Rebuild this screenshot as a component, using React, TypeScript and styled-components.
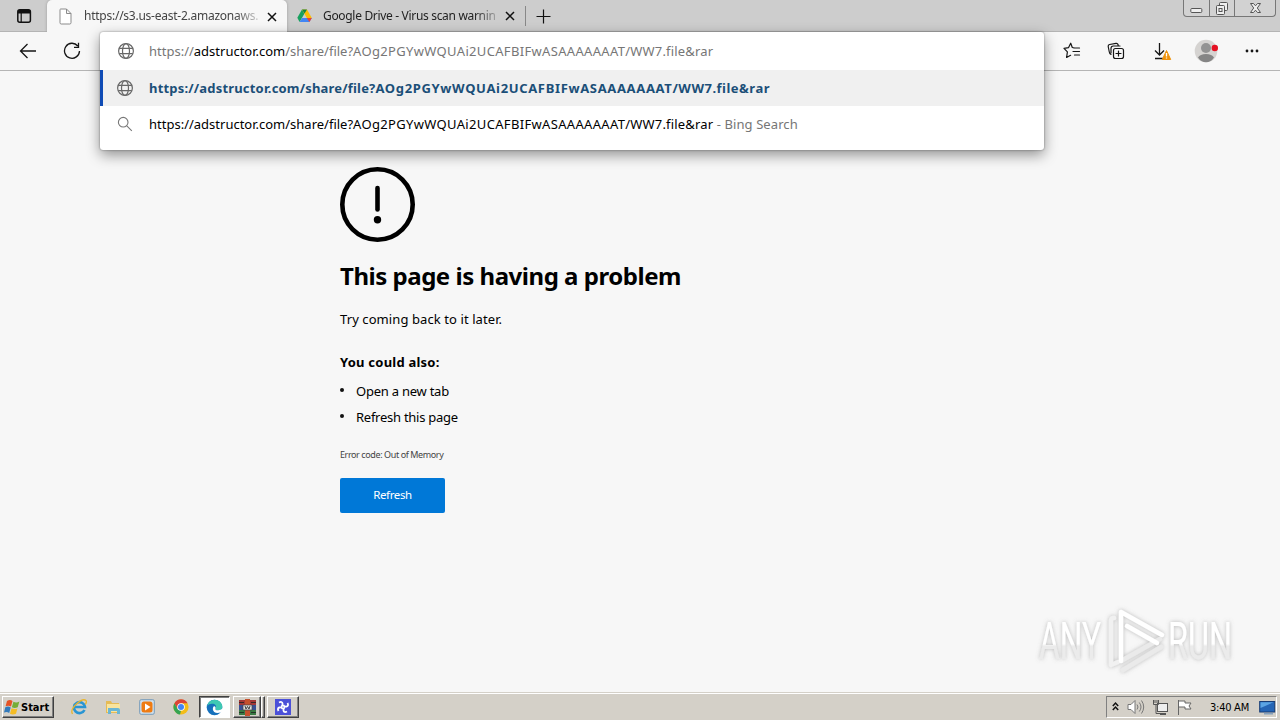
import React from "react";
import styled, { createGlobalStyle } from "styled-components";

const Global = createGlobalStyle`
  * { box-sizing: border-box; }
  body { margin: 0; overflow: hidden; font-family: "Noto Sans", "Open Sans", sans-serif; color: #000; }
  svg { display: block; flex: none; }
`;
const Screen = styled.div`
  width: 1280px; height: 720px; display: flex; flex-direction: column; background: #f7f7f7;
`;
const TabStrip = styled.header`
  height: 32px; flex: none; display: flex; background: #cdcdcd; border-bottom: 1px solid #b4b4b4;
`;
const TabMenu = styled.div`
  width: 47px; padding: 9px 0 0 17px;
`;
const Tab = styled.div<{ $active?: boolean; $width: number }>`
  width: ${p => p.$width}px; height: ${p => (p.$active ? 32 : 31)}px;
  display: flex; align-items: center; padding: 0 10px 0 ${p => (p.$active ? 11 : 10)}px;
  background: ${p => (p.$active ? "#f7f7f7" : "transparent")};
  border-radius: 5px 5px 0 0;
  box-shadow: ${p => (p.$active ? "0 0 3px #999" : "none")};
`;
const TabTitle = styled.span<{ $track: number; $color: string }>`
  width: 176px; margin-left: 11px; white-space: nowrap;
  font-size: 12px; line-height: 20px; letter-spacing: ${p => p.$track}px; color: ${p => p.$color};
  mask-image: linear-gradient(to right, #000 86%, rgba(0,0,0,.15));
`;
const CloseSlot = styled.span`
  margin-left: auto; padding-top: 1px;
`;
const NewTab = styled.div`
  display: flex; align-items: center; gap: 10px; height: 32px;
`;
const Divider = styled.i`
  width: 1px; height: 20px; background: #888;
`;
const WindowButtons = styled.div`
  margin: 0 4px 0 auto; height: 17px; display: flex; border: 1px solid #777; border-top: 0; border-radius: 0 0 4px 4px;
  background: #d2d2d2;
`;
const WindowButton = styled.div<{ $width: number }>`
  width: ${p => p.$width}px; display: flex; justify-content: center;
  & + & { border-left: 1px solid #777; }
`;
const Toolbar = styled.nav`
  position: relative; height: 39px; flex: none; display: flex; align-items: center; border-bottom: 1px solid #b5b5b5;
  background: #f7f7f7;
`;
const NavIcons = styled.div`
  display: flex; gap: 26px; padding-left: 19px;
`;
const ActionIcons = styled.div`
  margin-left: auto; display: flex; align-items: center; gap: 21px; padding-right: 16px;
`;
const Omnibox = styled.div`
  position: absolute; z-index: 2; left: 100px; top: 0; width: 944px; height: 118px; background: #fff;
  border-radius: 3px; box-shadow: 0 0 2px rgba(0,0,0,.45), 0 5px 14px rgba(0,0,0,.42);
`;
const Row = styled.div<{ $height: number; $selected?: boolean; $input?: boolean }>`
  height: ${p => p.$height}px; display: flex; align-items: center;
  padding-left: ${p => (p.$selected ? 14 : p.$input ? 18 : 17)}px;
  border-left: ${p => (p.$selected ? "3px solid #0f4bb5" : "0")};
  background: ${p => (p.$selected ? "#f0f0f0" : "transparent")};
`;
const RowText = styled.span<{ $color: string; $bold?: boolean; $input?: boolean; $track: number }>`
  margin-left: ${p => (p.$input ? 15 : 16)}px; white-space: pre; font-size: 13px; line-height: 18px;
  color: ${p => p.$color}; font-weight: ${p => (p.$bold ? 700 : 400)}; letter-spacing: ${p => p.$track}px;
`;
const Tint = styled.span<{ $color?: string; $track?: number }>`
  color: ${p => p.$color ?? "inherit"}; letter-spacing: ${p => (p.$track === undefined ? "inherit" : p.$track + "px")};
`;
const Page = styled.main`
  position: relative; flex: 1; padding: 96px 0 0 340px; display: flex; flex-direction: column; align-items: flex-start;
`;
const Heading = styled.h1`
  margin: 17px 0 0; font-size: 24px; line-height: 34px; font-weight: 700; letter-spacing: -0.47px; white-space: nowrap;
`;
const Line = styled.p<{ $top: number; $bold?: boolean; $track: number }>`
  margin: ${p => p.$top}px 0 0; font-size: 13px; line-height: 20px; font-weight: ${p => (p.$bold ? 700 : 400)};
  letter-spacing: ${p => p.$track}px; white-space: nowrap;
`;
const Tips = styled.ul`
  list-style: none; margin: 6px 0 0; padding: 0; font-size: 13px; line-height: 26px;
`;
const Tip = styled.li<{ $track: number }>`
  display: flex; align-items: center; letter-spacing: ${p => p.$track}px; white-space: nowrap;
  &::before { content: ""; width: 4px; height: 4px; border-radius: 2px; background: #111; margin: 0 12px 3px 0; }
`;
const ErrorCode = styled.p`
  margin: 17px 0 0; font-size: 9px; line-height: 16px; color: #444; letter-spacing: -0.4px; white-space: nowrap;
`;
const RefreshButton = styled.button`
  margin-top: 15px; width: 105px; height: 35px; border: 0; border-radius: 2px; padding: 0 0 2px; background: #0078d7; color: #fff;
  font: 11.5px/20px "Noto Sans", sans-serif; letter-spacing: -0.4px;
`;
const Watermark = styled.div`
  position: absolute; left: 1030px; top: 534px;
`;
const Taskbar = styled.footer`
  height: 28px; flex: none; display: flex; align-items: center; padding: 1px 3px 0 2px;
  background: #d4d0c8; border-top: 1px solid #d4d0c8; box-shadow: inset 0 1px #fff;
`;
const Start = styled.div`
  width: 52px; height: 22px; display: flex; align-items: center; padding-left: 1px; border: 1px solid;
  border-color: #fff #404040 #404040 #fff; box-shadow: inset -1px -1px #808080;
  font: 700 11px "DejaVu Sans Condensed", "DejaVu Sans", sans-serif; letter-spacing: 0;
`;
const QuickLaunch = styled.div`
  display: flex; gap: 18px; margin: 0 10px 0 17px;
`;
const TaskButton = styled.div<{ $pressed?: boolean; $width: number; $gap?: number }>`
  width: ${p => p.$width}px; height: 22px; margin-right: ${p => p.$gap ?? 0}px; display: flex; align-items: center; justify-content: center;
  background: ${p => (p.$pressed ? "#fff" : "#d4d0c8")}; border: 1px solid;
  border-color: ${p => (p.$pressed ? "#404040 #fff #fff #404040" : "#fff #404040 #404040 #fff")};
  box-shadow: ${p => (p.$pressed ? "inset 1px 1px #808080" : "inset -1px -1px #808080")};
`;
const Tray = styled.div`
  margin-left: auto; width: 171px; height: 22px; display: flex; align-items: center; padding-left: 4px;
  border: 1px solid; border-color: #808080 #fff #fff #808080;
`;
const TrayIcons = styled.div`
  display: flex; align-items: center; gap: 7px;
`;
const Clock = styled.span`
  margin: 0 10px 0 17px; font: 11px "DejaVu Sans Condensed", "DejaVu Sans", sans-serif; letter-spacing: -0.25px; white-space: nowrap;
`;

const Globe = () => (
  <svg width="16" height="16" viewBox="0 0 16 16" fill="none" stroke="#686868" strokeWidth="1.2">
    <circle cx="8" cy="8" r="7.4" /><ellipse cx="8" cy="8" rx="3.5" ry="7.4" /><path d="M1.2 5.4h13.6M1.2 10.6h13.6" />
  </svg>
);
const Cross = () => (
  <svg width="10" height="10" viewBox="0 0 10 10" stroke="#111" strokeWidth="1.5"><path d="M1 1l8 8M9 1L1 9" /></svg>
);

const FileId = "AOg2PGYwWQUAi2UCAFBIFwAS" + "A".repeat(7) + "T";
const SharePath = ({ bold }: { bold?: boolean }) => (
  <>/share/file?<Tint $track={bold ? 0.65 : 0.33}>{FileId}</Tint><Tint $track={bold ? 0.5 : 0.18}>/WW7.file&amp;rar</Tint></>
);

const Drive = () => (
  <svg width="15" height="14" viewBox="0 0 15 14">
    <path d="M5 .5L.3 8.8 2.6 13 7.5 4.5z" fill="#18a15f" /><path d="M5 .5h5L14.8 9h-5z" fill="#fbbc05" />
    <path d="M5 .5h5L7.5 4.6z" fill="#118342" /><path d="M2.6 13L5 9h9.8l-2.4 4z" fill="#4285f4" /><path d="M9.8 9h5l-2.4 4z" fill="#ea4335" />
  </svg>
);

const TopTabs = () => (
  <TabStrip>
    <TabMenu>
      <svg width="15" height="14" viewBox="0 0 15 14"><rect x=".8" y=".8" width="12.6" height="12.4" rx="2" fill="none" stroke="#111" strokeWidth="1.5" /><path d="M1 1h12v3.5H1z" fill="#111" /><path d="M4.2 4v9" stroke="#111" strokeWidth="1.2" /></svg>
    </TabMenu>
    <Tab $active $width={240}>
      <svg width="15" height="17" viewBox="0 0 15 17" fill="#fff" stroke="#8b8b8b"><path d="M2.5 1h6l4.5 4.5v9.2q0 1.3-1.2 1.3H3.2Q2 16 2 14.7V2q0-1 .5-1zM8.5 1v4.5H13" /></svg>
      <TabTitle $track={-0.25} $color="#444">https://s3.us-east-2.amazonaws.</TabTitle>
      <CloseSlot><Cross /></CloseSlot>
    </Tab>
    <Tab $width={238}>
      <Drive />
      <TabTitle $track={-0.32} $color="#222">Google Drive - Virus scan warnin</TabTitle>
      <CloseSlot><Cross /></CloseSlot>
    </Tab>
    <NewTab><Divider /><svg width="15" height="15" viewBox="0 0 15 15" stroke="#111" strokeWidth="1.2"><path d="M7.5.5v14M.5 7.5h14" /></svg></NewTab>
    <WindowButtons>
      <WindowButton $width={25}><svg width="13" height="16" viewBox="0 0 13 16"><rect x=".8" y="8.5" width="11" height="4" rx="1" fill="#eee" stroke="#555" /></svg></WindowButton>
      <WindowButton $width={25}><svg width="14" height="16" viewBox="0 0 14 16" fill="#eee" stroke="#555"><rect x="4.5" y="2.5" width="8" height="8" rx="1" /><rect x="1.5" y="5.5" width="8" height="9" rx="1" /><rect x="4" y="8.5" width="3" height="3" /></svg></WindowButton>
      <WindowButton $width={41}><svg width="13" height="16" viewBox="0 0 13 16"><path d="M1.5 3.5h3l2 2.3 2-2.3h3L8.3 8l3.2 4.5h-3l-2-2.3-2 2.3h-3L4.7 8z" fill="#eee" stroke="#555" /></svg></WindowButton>
    </WindowButtons>
  </TabStrip>
);

const Actions = () => (
  <ActionIcons>
    <svg width="24" height="24" viewBox="-2 0 24 24" fill="none" stroke="#161616" strokeWidth="1.2" strokeLinejoin="round" strokeLinecap="round"><path d="M13 8.8l-1.7-.3L9.7 4.2 7.6 8.6 3 9.3l3.4 3.5L5.6 18.5l4-2.2M13.5 9h5M12 12.5h6.5M13.5 16h5" /></svg>
    <svg width="24" height="24" viewBox="0 0 24 24" fill="none" stroke="#161616" strokeWidth="1.2" strokeLinecap="round"><rect x="9.5" y="9.5" width="10" height="10" rx="2" /><path d="M14.5 12v5M12 14.5h5M7 15.5Q5.6 15 5.3 13L4.2 7.5Q4 5.8 5.6 5.5L12 4.3q1.6-.2 2 1.2l.3 1.3M7 14V9.3Q7 7 9.3 7H16" /></svg>
    <svg width="24" height="24" viewBox="0 0 24 24" fill="none" stroke="#161616" strokeWidth="1.3"><path d="M10.5 4v12M6 11.5l4.5 4.5 4.5-4.5M6 19.5h8" /><path d="M17.5 11.5l4.2 9h-8.4z" fill="#ef930c" stroke="#ef930c" strokeWidth="1" strokeLinejoin="round" /><path d="M17.5 14v3.5M17.5 18.5v1" stroke="#fff" /></svg>
    <svg width="25" height="24" viewBox="0 0 25 24"><circle cx="12" cy="12" r="11.3" fill="#d5d3d1" /><circle cx="12" cy="9" r="5" fill="#939393" /><path d="M4 18.5Q6 15 12 15t8 3.5Q17 23.3 12 23.3T4 18.5z" fill="#858585" /><circle cx="20.8" cy="9" r="3.2" fill="#e51123" /></svg>
    <svg width="24" height="24" viewBox="0 0 24 24" fill="#161616"><circle cx="7" cy="12" r="1.4" /><circle cx="12" cy="12" r="1.4" /><circle cx="17" cy="12" r="1.4" /></svg>
  </ActionIcons>
);

const AnyRun = () => (
  <svg width="230" height="76" viewBox="0 0 230 76">
    <defs>
      <linearGradient id="fade" x1="0" y1="0" x2="0" y2="1"><stop offset=".54" stopColor="#fff" /><stop offset=".58" stopColor="#ebebeb" /></linearGradient>
      <filter id="glow" x="-20%" y="-20%" width="140%" height="140%"><feDropShadow dx="0" dy="0" stdDeviation="2" floodColor="#777" floodOpacity=".5" /></filter>
    </defs>
    <g filter="url(#glow)" fontFamily="Roboto, sans-serif" fontSize="51">
      <text x="9" y="54" textLength="62" lengthAdjust="spacingAndGlyphs" fill="url(#fade)">ANY</text>
      <text x="138" y="54" textLength="64" lengthAdjust="spacingAndGlyphs" fill="url(#fade)">RUN</text>
      <g fill="none" strokeWidth="4.5" strokeLinecap="round" strokeLinejoin="round">
        <path d="M84 13q-3 0-3 3v44l7-3" stroke="#f1f1f1" />
        <path d="M91 56l39-22M93 65l38-23" stroke="#eaeaea" />
        <path d="M91 56V7l41 23M97 21l30 17" stroke="#fff" />
      </g>
    </g>
  </svg>
);

const Bottom = () => (
  <Taskbar>
    <Start>
      <svg width="17" height="16" viewBox="0 0 17 16"><path d="M3 2q3-2 5.5 0L7 7.5Q4.5 6 1.6 7.3z" fill="#e65325" /><path d="M9.4 2.8q3 1.5 6-.3l-1.7 5.8q-3 1.5-5.8 0z" fill="#75ad36" /><path d="M1.3 8.3q3-1.5 5.4.2L5.2 14q-2.5-2-5.2-.4z" fill="#337abb" /><path d="M7.6 9.2q3 1.5 5.8.2L12 14.8q-3.3 1.5-6 0z" fill="#f4bc24" /></svg>
      Start
    </Start>
    <QuickLaunch>
      <svg width="16" height="16" viewBox="0 0 16 16" fill="none"><path d="M13.5 11A5.5 5.5 0 1 1 14 8H4" stroke="#2995d3" strokeWidth="2.6" /><path d="M1.5 15Q-1 11 5.5 5T15 1.5q1 1.5-.7 4" stroke="#e9b52d" strokeWidth="1.3" /></svg>
      <svg width="16" height="16" viewBox="0 0 16 16"><path d="M1 2h5l1 2h7v10H1z" fill="#e5bb56" /><path d="M2 5h13v8H2z" fill="#f9e49d" /><path d="M3 9h10q2 0 2 2v4h-3v-3H6v3H3z" fill="#6bb6d4" /></svg>
      <svg width="16" height="16" viewBox="0 0 16 16"><rect x=".7" y=".7" width="14.6" height="14.6" rx="1.5" fill="#d0e0ed" stroke="#769bb9" /><rect x="2.5" y="2.5" width="11" height="11" rx="2.5" fill="#ee7b12" /><path d="M6 4.5l5.5 3.5L6 11.5z" fill="#fff" /></svg>
      <svg width="16" height="16" viewBox="0 0 16 16"><circle cx="8" cy="8" r="7.6" fill="#f3bd18" /><path d="M1.4 4.2A7.6 7.6 0 0 1 14.6 4.2H8L4.6 10z" fill="#db4437" /><path d="M1.4 4.2l3.3 5.7L8 11.8l-1 3.7A7.6 7.6 0 0 1 1.4 4.2z" fill="#35a453" /><circle cx="8" cy="8" r="3.8" fill="#fff" /><circle cx="8" cy="8" r="3" fill="#4285f4" /></svg>
    </QuickLaunch>
    <TaskButton $width={31} $gap={3} $pressed>
      <svg width="17" height="17" viewBox="0 0 17 17"><circle cx="8.5" cy="8.5" r="7.8" fill="#1670bb" /><path d="M1 7Q3 .7 8.5.7q6.8 0 7.8 6.8.2 4-4.3 4-3 0-2.5-1.7Q11 6 7.5 4.8 3.5 4 1 7z" fill="#3fc8b3" /><path d="M8 7q-2.5 3 .2 6 2.3 1.5 6.5.5 1.8-2 1.8-4-2 2-4.7 1.8-3 0-2.3-1.8.8-1.8-1.5-2.5z" fill="#fff" /></svg>
    </TaskButton>
    <TaskButton $width={28}>
      <svg width="17" height="17" viewBox="0 0 17 17"><path d="M0 1h17v5H0z" fill="#a33736" /><path d="M0 6h17v5H0z" fill="#384f92" /><path d="M0 11h17v5H0z" fill="#397943" /><path d="M6 0h5v17H6z" fill="#c5502c" /><path d="M4 6h9v5H4z" fill="#dedede" stroke="#444" strokeWidth=".7" /><path d="M6 7l1 3 1.5-2.5L10 10l1-3M0 3.5h5M12 3.5h5M0 13.5h5M12 13.5h5" fill="none" stroke="#222" strokeWidth=".8" /></svg>
    </TaskButton>
    <TaskButton $width={4} $gap={2} />
    <TaskButton $width={32}>
      <svg width="16" height="16" viewBox="0 0 16 16"><path d="M0 0h16v16H0z" fill="#4b50d8" /><path d="M4 3.5q3-1.5 3.5 1T6 7.5M12.5 4q1.5 3-1 3.5T8.5 6M12 12.5q-3 1.5-3.5-1t1.5-3M3.5 12Q2 9 4.5 8.5T7.5 10" fill="none" stroke="#fff" strokeWidth="1.8" /></svg>
    </TaskButton>
    <Tray>
      <TrayIcons>
        <svg width="9" height="12" viewBox="0 0 9 12" fill="none" stroke="#111" strokeWidth="1.5"><path d="M1.8 5l2.7-3 2.7 3M1.8 9l2.7-3 2.7 3" /></svg>
        <svg width="18" height="16" viewBox="0 0 18 16" fill="#fff" stroke="#777"><path d="M1 5.5h3l4-4v13l-4-4H1z" /><path d="M10 5.5q2 2.5 0 5M12.3 3.5q3.4 4.5 0 9M14.5 1.5q4.4 6.5 0 13" fill="none" /></svg>
        <svg width="17" height="17" viewBox="0 0 17 17" fill="#eee" stroke="#555"><rect x="5.5" y="4.5" width="10" height="8" /><path d="M1.5 1v4.5h5V1M3 1v3M5 1v3M4 6v8.5h10M8 15.5h6" fill="none" /></svg>
        <svg width="17" height="16" viewBox="0 0 17 16" fill="#fff" stroke="#666"><path d="M2.5 1v15M2.5 2H9v2h6l-2 3 2 3H9V8H2.5" /></svg>
      </TrayIcons>
      <Clock>3:40 AM</Clock>
      <svg width="17" height="15" viewBox="0 0 17 15"><rect x=".7" y="1.5" width="15" height="10.5" fill="#2565b5" stroke="#173c75" /><path d="M1.5 2.3h13L1.5 8z" fill="#5ba4e4" /><path d="M5 13h9v1.5H5z" fill="#85a0bb" /></svg>
    </Tray>
  </Taskbar>
);

export default function App() {
  return (
    <Screen>
      <Global />
      <TopTabs />
      <Toolbar>
        <NavIcons>
          <svg width="18" height="18" viewBox="0 0 18 18" fill="none" stroke="#161616" strokeWidth="1.3"><path d="M17 9H1.5M8.5 2l-7 7 7 7" /></svg>
          <svg width="18" height="18" viewBox="0 0 18 18" fill="none" stroke="#161616" strokeWidth="1.3"><path d="M14.8 4A7.5 7.5 0 1 0 16.5 9M15.5.8v4.5H11" /></svg>
        </NavIcons>
        <Omnibox>
          <Row $height={38} $input><Globe /><RowText $color="#767676" $input $track={0}>https://<Tint $color="#000">adstructor.com</Tint><SharePath /></RowText></Row>
          <Row $height={36} $selected><Globe /><RowText $color="#1b4f78" $bold $track={0.18}>https://adstructor.com<SharePath bold /></RowText></Row>
          <Row $height={36}>
            <svg width="16" height="16" viewBox="0 0 16 16" fill="none" stroke="#777" strokeWidth="1.1"><circle cx="6.2" cy="6.2" r="4.8" /><path d="M9.8 9.8l5 5" /></svg>
            <RowText $color="#000" $track={0}>https://adstructor.com<SharePath /><Tint $color="#767676" $track={0.08}> - Bing Search</Tint></RowText>
          </Row>
        </Omnibox>
        <Actions />
      </Toolbar>
      <Page>
        <svg width="75" height="75" viewBox="0 0 75 75"><circle cx="37.5" cy="37.5" r="35.2" fill="none" stroke="#000" strokeWidth="4.6" /><path d="M37.5 21v21.5" stroke="#000" strokeWidth="4.6" strokeLinecap="round" /><circle cx="37.5" cy="52.7" r="3.7" /></svg>
        <Heading>This page is having a problem</Heading>
        <Line $top={16} $track={0.09}>Try coming back to it later.</Line>
        <Line $top={23} $bold $track={0.23}>You could also:</Line>
        <Tips><Tip $track={-0.24}>Open a new tab</Tip><Tip $track={-0.26}>Refresh this page</Tip></Tips>
        <ErrorCode>Error code: Out of Memory</ErrorCode>
        <RefreshButton>Refresh</RefreshButton>
        <Watermark><AnyRun /></Watermark>
      </Page>
      <Bottom />
    </Screen>
  );
}
